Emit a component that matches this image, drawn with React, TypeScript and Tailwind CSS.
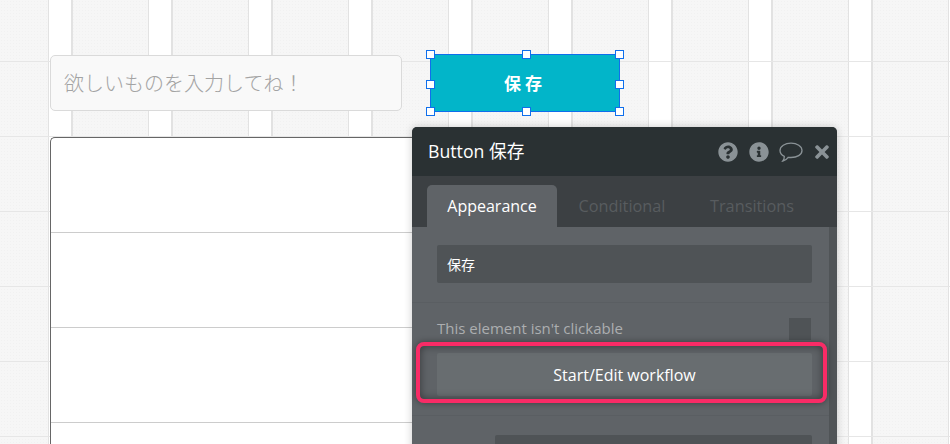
import { FaQuestionCircle, FaInfoCircle, FaTimes } from 'react-icons/fa'

const handleClass = 'absolute w-[9px] h-[9px] bg-white border border-[#0f6fec]'

export default function App() {
  return (
    <div className="relative w-[950px] h-[444px] overflow-hidden bg-[#f6f6f6] font-['Open_Sans','Noto_Sans_CJK_JP',sans-serif] [background-image:linear-gradient(#e6e6e6_1px,transparent_1px),linear-gradient(90deg,#e2e2e2_1.5px,#ffffff_1.5px,#ffffff_23.5px,#e2e2e2_23.5px,#e2e2e2_25px,transparent_25px),radial-gradient(#f1f1f1_0.6px,transparent_0.7px)] [background-size:100%_75px,100px_100%,3px_3px] [background-position:0_61px,48px_0,0_0]">
      {/* Top row */}
      <div className="flex items-start pt-[54px] pl-[50px]">
        <div className="mt-[1px] w-[352px] h-[56px] flex items-center pl-[13px] bg-[#f9f9f9] border border-[#dadada] rounded-[5px] text-[20px] text-[#a3a3a3] font-['Noto_Sans_CJK_JP',sans-serif] font-light">
          欲しいものを入力してね！
        </div>
        {/* Selected button with handles */}
        <div className="relative ml-[28px] w-[190px] h-[58px] flex items-center justify-center bg-[#02b5c9] border border-[#0f6fec] text-white text-[17px] font-bold tracking-[4px] font-['Noto_Sans_CJK_JP',sans-serif]">
          保存
          <span className={`${handleClass} -left-[5px] -top-[5px]`} />
          <span className={`${handleClass} left-[91px] -top-[5px]`} />
          <span className={`${handleClass} -right-[5px] -top-[5px]`} />
          <span className={`${handleClass} -left-[5px] top-[25px]`} />
          <span className={`${handleClass} -right-[5px] top-[25px]`} />
          <span className={`${handleClass} -left-[5px] -bottom-[5px]`} />
          <span className={`${handleClass} left-[91px] -bottom-[5px]`} />
          <span className={`${handleClass} -right-[5px] -bottom-[5px]`} />
        </div>
      </div>

      {/* Repeating group */}
      <div className="mt-[25px] ml-[50px] w-[400px] bg-white border-l border-t border-[#666666] rounded-tl-[5px]">
        <div className="h-[95px] border-b border-[#cccccc]" />
        <div className="h-[95px] border-b border-[#cccccc]" />
        <div className="h-[95px] border-b border-[#cccccc]" />
        <div className="h-[40px]" />
      </div>

      {/* Property editor */}
      <div className="absolute left-[412px] top-[127px] w-[425px] h-[340px] flex flex-col rounded-t-[5px] overflow-hidden bg-[#5f6367] shadow-[0_0_8px_rgba(0,0,0,0.2)]">
        <div className="h-[49px] shrink-0 flex items-center pl-[16px] bg-[#2a3133] text-white text-[17.7px]">
          <span>Button 保存</span>
          <div className="ml-auto flex items-center text-[#8a9296]">
            <FaQuestionCircle className="w-[20px] h-[20px]" />
            <FaInfoCircle className="ml-[11px] w-[20px] h-[20px]" />
            <svg viewBox="0 0 24 20" className="ml-[10px] w-[24px] h-[20px]" fill="none" stroke="currentColor" strokeWidth="1.3">
              <path d="M12 1.2c6 0 11 3 11 7.3s-5 7-11 7c-1 0-2 0-2.800-.2C8 17 6.500 18.500 3.800 19c1-1.300 1.500-2.600 1.500-4.600C2.600 13 1 11 1 8.500 1 4.200 6 1.200 12 1.200z" />
            </svg>
            <FaTimes className="ml-[10px] mr-[6px] w-[18px] h-[20px]" />
          </div>
        </div>

        <div className="h-[51px] shrink-0 flex items-end pl-[15px] bg-[#3c4043] text-[16px]">
          <div className="w-[130px] h-[42px] flex items-center justify-center rounded-t-[5px] bg-[#5f6367] text-white">Appearance</div>
          <div className="w-[130px] h-[42px] flex items-center justify-center text-[16.3px] text-[#585c5f]">Conditional</div>
          <div className="w-[130px] h-[42px] flex items-center justify-center text-[16.3px] text-[#585c5f]">Transitions</div>
        </div>

        <div className="flex-1 flex">
          <div className="flex-1 flex flex-col">
            <div className="pt-[18px] pb-[19px] pl-[25px] pr-[17px] border-b border-[#5a5e62]">
              <div className="h-[38px] flex items-center pl-[10px] rounded-[2px] bg-[#4f5356] text-white text-[14px] font-['Noto_Sans_CJK_JP',sans-serif]">保存</div>
            </div>
            <div className="pt-[15px] pl-[25px] pr-[17px] h-[113px] border-b border-[#5a5e62]">
              <div className="flex items-center justify-between pr-[1px] text-[15px] text-[#acaeb0]">
                <span className="-mt-[2px]">This element isn't clickable</span>
                <span className="w-[22px] h-[22px] bg-[#4f5356]" />
              </div>
              <div className="mt-[13px] h-[43px] flex items-center justify-center rounded-[2px] bg-[#686d70] text-white text-[16px]">Start/Edit workflow</div>
            </div>
            <div className="pt-[19px] pl-[83px] pr-[17px]">
              <div className="h-[40px] rounded-[2px] bg-[#4f5356]" />
            </div>
          </div>
          <div className="w-[8px] bg-[#505457]" />
        </div>
      </div>

      {/* Highlight annotation */}
      <div className="absolute left-[416px] top-[342px] w-[411px] h-[61px] rounded-[8px] border-[4px] border-[#f92b66] shadow-[0_0_6px_rgba(0,0,0,0.4),inset_0_0_8px_rgba(0,0,0,0.45)]" />
    </div>
  )
}
